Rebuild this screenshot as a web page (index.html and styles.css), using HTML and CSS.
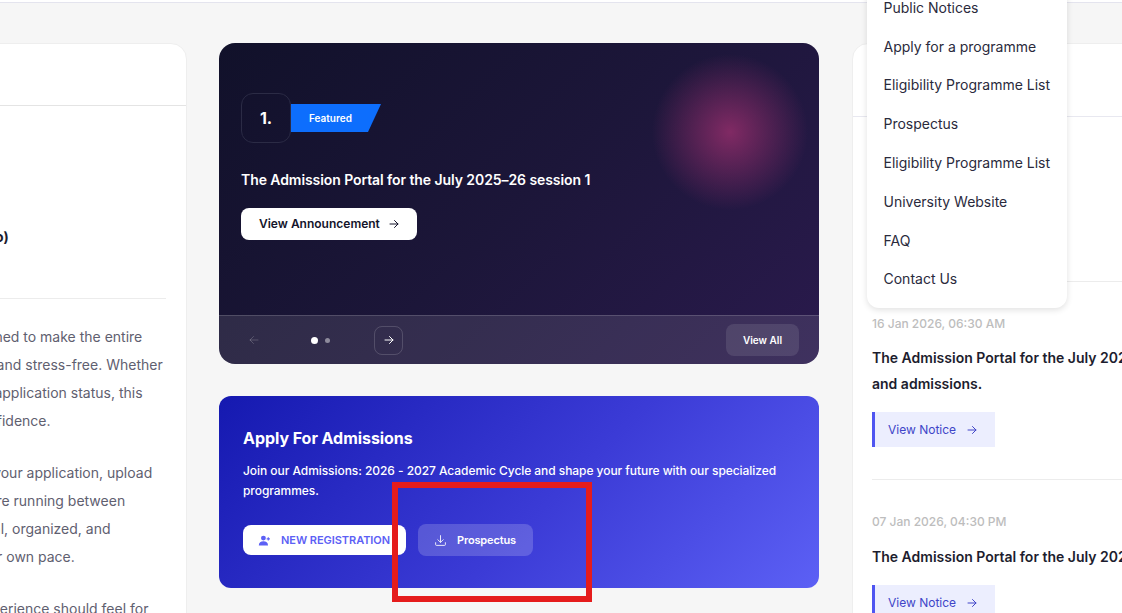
FILE: index.html
```html
<!DOCTYPE html>
<html lang="en">
<head>
    <meta charset="UTF-8">
    <meta name="viewport" content="width=device-width, initial-scale=1.0">
    <title>Admission Portal</title>
    <link rel="stylesheet" href="styles.css">
</head>
<body>

    <!-- Top bar -->
    <div class="top-bar"></div>

    <main class="layout">

        <!-- Left: about card -->
        <section class="card about-card">
            <div class="about-head"></div>
            <div class="about-body">
                <h4 class="about-name">Admissions Portal Guide (Info)</h4>
                <hr class="about-rule">
                <p class="about-text">The admission portal is designed to make the entire<br>application simple, fast, easy and stress-free. Whether<br>you are new or tracking your application status, this<br>a final step is taken in full confidence.</p>
                <p class="about-text">You can begin and complete your application, upload<br>your files and pay fees no more running between<br>The whole process is all digital, organized, and<br>and you can finish it all at your own pace.</p>
                <p class="about-text">We believe this admission experience should feel for</p>
            </div>
        </section>

        <!-- Centre column -->
        <div class="centre">
            <section class="hero">
                <div class="hero-body">
                    <div class="hero-tag">
                        <span class="hero-num">1.</span>
                        <span class="hero-flag">Featured</span>
                    </div>
                    <h2 class="hero-title">The Admission Portal for the July 2025–26 session 1</h2>
                    <a class="btn-announce" href="#">View Announcement
                        <svg class="icon" viewBox="0 0 24 24"><path d="M4 12h16M13 5l7 7-7 7"/></svg>
                    </a>
                </div>
                <div class="hero-foot">
                    <div class="hero-nav">
                        <span class="nav-btn nav-off"><svg class="icon" viewBox="0 0 24 24"><path d="M20 12H4M11 5l-7 7 7 7"/></svg></span>
                        <span class="dots"><i class="dot dot-on"></i><i class="dot"></i></span>
                        <span class="nav-btn nav-on"><svg class="icon" viewBox="0 0 24 24"><path d="M4 12h16M13 5l7 7-7 7"/></svg></span>
                    </div>
                    <a class="btn-all" href="#">View All</a>
                </div>
            </section>

            <section class="apply">
                <h3 class="apply-title">Apply For Admissions</h3>
                <p class="apply-text">Join our Admissions: 2026 - 2027 Academic Cycle and shape your future with our specialized programmes.</p>
                <div class="apply-btns">
                    <a class="btn-register" href="#">
                        <svg class="icon-user" viewBox="0 0 24 24"><circle cx="10" cy="7.5" r="4.5"/><path d="M1.5 21c0-4.800 3.600-7.500 8.500-7.500s8.500 2.700 8.500 7.500z"/><path d="M19 6v6M16 9h6" class="plus"/></svg>
                        NEW REGISTRATION
                    </a>
                    <a class="btn-prospectus" href="#">
                        <svg class="icon icon-dl" viewBox="0 0 24 24"><path d="M12 3v12M7 10.500l5 5 5-5M3 16v3.500a1.500 1.500 0 0 0 1.500 1.500h15a1.500 1.500 0 0 0 1.500-1.500V16"/></svg>
                        Prospectus
                    </a>
                </div>
            </section>
        </div>

        <!-- Right: notices -->
        <section class="card notices-card">
            <div class="notices-head"></div>
            <div class="notices-list">
                <article class="notice">
                    <p class="notice-date">21 Jan 2026, 10:00 AM</p>
                    <h4 class="notice-title">Admission Notice</h4>
                    <a class="btn-notice" href="#">View Notice
                        <svg class="icon" viewBox="0 0 24 24"><path d="M4 12h16M13 5l7 7-7 7"/></svg>
                    </a>
                </article>
                <article class="notice">
                    <p class="notice-date">16 Jan 2026, 06:30 AM</p>
                    <h4 class="notice-title">The Admission Portal for the July 2025–26 session is open for registrations<br>and admissions.</h4>
                    <a class="btn-notice" href="#">View Notice
                        <svg class="icon" viewBox="0 0 24 24"><path d="M4 12h16M13 5l7 7-7 7"/></svg>
                    </a>
                </article>
                <article class="notice notice-last">
                    <p class="notice-date">07 Jan 2026, 04:30 PM</p>
                    <h4 class="notice-title">The Admission Portal for the July 2025–26 session is now open.</h4>
                    <a class="btn-notice" href="#">View Notice
                        <svg class="icon" viewBox="0 0 24 24"><path d="M4 12h16M13 5l7 7-7 7"/></svg>
                    </a>
                </article>
            </div>
        </section>
    </main>

    <!-- Open menu -->
    <ul class="menu">
        <li><a href="#">Public Notices</a></li>
        <li><a href="#">Apply for a programme</a></li>
        <li><a href="#">Eligibility Programme List</a></li>
        <li><a href="#">Prospectus</a></li>
        <li><a href="#">Eligibility Programme List</a></li>
        <li><a href="#">University Website</a></li>
        <li><a href="#">FAQ</a></li>
        <li><a href="#">Contact Us</a></li>
    </ul>

    <!-- Red highlight box -->
    <div class="highlight"></div>

</body>
</html>
```

FILE: styles.css
```css
/* General Styles */
* {
    margin: 0;
    padding: 0;
    box-sizing: border-box;
    font-family: Inter, "Liberation Sans", sans-serif;
}
html, body {
    height: 613px;
    overflow: hidden;
}
body {
    position: relative;
    background: #f6f6f6;
    color: #1d1d2e;
}
a {
    text-decoration: none;
}
.icon {
    width: 12px;
    height: 12px;
    fill: none;
    stroke: currentColor;
    stroke-width: 2;
    stroke-linecap: round;
    stroke-linejoin: round;
    flex-shrink: 0;
}

/* Top bar */
.top-bar {
    height: 3px;
    background: #fff;
    border-bottom: 1px solid #e4e4ee;
}

/* Layout */
.layout {
    display: flex;
    align-items: flex-start;
    gap: 33px;
    padding-top: 40px;
}
.card {
    flex-shrink: 0;
    background: #fff;
    border: 1px solid #eeeeee;
    border-radius: 16px;
}

/* About card */
.about-card {
    width: 406px;
    margin-left: -219px;
    margin-right: -1px;
    height: 640px;
}
.about-head {
    height: 62px;
    border-bottom: 1px solid #e4e4e4;
}
.about-body {
    padding: 120px 20px 0 19px;
}
.about-name {
    font-size: 14px;
    line-height: 22px;
    font-weight: 700;
    white-space: nowrap;
}
.about-rule {
    border: 0;
    border-top: 1px solid #ececec;
    margin: 50px 0 24px;
}
.about-text {
    font-size: 14px;
    line-height: 28px;
    color: #5f6070;
    white-space: nowrap;
    margin-bottom: 24px;
}

/* Centre column */
.centre {
    flex-shrink: 0;
    width: 600px;
    display: flex;
    flex-direction: column;
    gap: 32px;
}

/* Hero */
.hero {
    height: 321px;
    border-radius: 16px;
    overflow: hidden;
    display: flex;
    flex-direction: column;
    color: #fff;
    background:
        radial-gradient(circle 78px at 511px 89px, rgba(139, 44, 104, 0.9), rgba(139, 44, 104, 0)),
        linear-gradient(135deg, #11112a 0%, #1c1639 50%, #2a1a4d 100%);
}
.hero-body {
    flex: 1;
    padding: 50px 22px 0;
}
.hero-tag {
    display: flex;
    align-items: center;
}
.hero-num {
    width: 50px;
    height: 50px;
    display: flex;
    align-items: center;
    justify-content: center;
    border: 1px solid #2b2b45;
    border-radius: 12px;
    font-size: 16px;
    font-weight: 700;
}
.hero-flag {
    width: 90px;
    height: 28px;
    display: flex;
    align-items: center;
    padding-left: 18px;
    background: #0d6efd;
    font-size: 10px;
    font-weight: 600;
    clip-path: polygon(0 0, 100% 0, calc(100% - 13px) 100%, 0 100%);
}
.hero-title {
    margin-top: 26px;
    font-size: 14px;
    line-height: 21px;
    font-weight: 600;
    letter-spacing: -0.08px;
}
.btn-announce {
    margin-top: 18px;
    width: 176px;
    height: 32px;
    display: flex;
    align-items: center;
    gap: 8px;
    padding: 0 0 1px 18px;
    background: #fff;
    color: #14142b;
    border-radius: 8px;
    font-size: 12px;
    font-weight: 600;
}
.hero-foot {
    height: 49px;
    display: flex;
    align-items: center;
    justify-content: space-between;
    padding: 0 20px;
    background: rgba(255, 255, 255, 0.1);
    border-top: 1px solid rgba(255, 255, 255, 0.16);
}
.hero-nav {
    width: 164px;
    display: flex;
    align-items: center;
    justify-content: space-between;
}
.nav-btn {
    width: 29px;
    height: 29px;
    display: flex;
    align-items: center;
    justify-content: center;
    border-radius: 8px;
}
.nav-off {
    color: rgba(255, 255, 255, 0.2);
}
.nav-on {
    border: 1px solid rgba(255, 255, 255, 0.16);
}
.dots {
    display: flex;
    align-items: center;
    gap: 7px;
    margin-right: 2px;
}
.dot {
    width: 5px;
    height: 5px;
    border-radius: 50%;
    background: rgba(255, 255, 255, 0.45);
}
.dot-on {
    width: 7px;
    height: 7px;
    background: #fff;
}
.btn-all {
    width: 73px;
    height: 32px;
    display: flex;
    align-items: center;
    justify-content: center;
    border-radius: 8px;
    background: rgba(255, 255, 255, 0.1);
    color: #fff;
    font-size: 10px;
    font-weight: 600;
}

/* Apply card */
.apply {
    height: 192px;
    padding: 31px 24px 0;
    border-radius: 12px;
    color: #fff;
    background: linear-gradient(135deg, #1519b0 0%, #3b3bd6 55%, #5c60f5 100%);
}
.apply-title {
    font-size: 16px;
    line-height: 22px;
    font-weight: 700;
    letter-spacing: -0.05px;
}
.apply-text {
    margin-top: 12px;
    font-size: 12px;
    line-height: 19.5px;
    font-weight: 500;
    letter-spacing: -0.055px;
}
.apply-btns {
    margin-top: 24px;
    display: flex;
    align-items: center;
    gap: 12px;
}
.btn-register {
    width: 163px;
    height: 30px;
    display: flex;
    align-items: center;
    gap: 10px;
    padding-left: 15px;
    background: #fff;
    color: #5c60f5;
    border-radius: 8px;
    font-size: 11px;
    font-weight: 600;
    white-space: nowrap;
    letter-spacing: -0.05px;
}
.icon-user {
    width: 13px;
    height: 13px;
    fill: #5c60f5;
}
.icon-user .plus {
    fill: none;
    stroke: #5c60f5;
    stroke-width: 2;
}
.btn-prospectus {
    width: 115px;
    height: 32px;
    display: flex;
    align-items: center;
    gap: 10px;
    padding-left: 16px;
    background: rgba(255, 255, 255, 0.18);
    color: #fff;
    border-radius: 8px;
    font-size: 11px;
    font-weight: 600;
    letter-spacing: -0.15px;
}
.icon-dl {
    width: 13px;
    height: 13px;
    stroke-width: 1.6;
}

/* Notices card */
.notices-card {
    width: 500px;
    height: 640px;
}
.notices-head {
    height: 73px;
    border-bottom: 1px solid #e8e8f0;
}
.notices-list {
    padding: 0 19px;
}
.notice {
    padding: 33px 0 32px;
    border-bottom: 1px solid #ececec;
}
.notice:first-child {
    padding-top: 26px;
}
.notice-date {
    font-size: 12px;
    line-height: 18px;
    font-weight: 500;
    color: #bdbdbd;
}
.notice-title {
    margin-top: 12px;
    font-size: 14px;
    line-height: 26px;
    font-weight: 600;
    white-space: nowrap;
    color: #1d1d2e;
}
.notice-last .notice-title {
    margin-top: 13px;
}
.btn-notice {
    margin-top: 15px;
    width: 123px;
    height: 35px;
    display: flex;
    align-items: center;
    gap: 10px;
    padding-left: 13px;
    background: #eceefe;
    border-left: 3px solid #4f55f1;
    color: #4045c8;
    font-size: 12px;
}

/* Open menu */
.menu {
    position: absolute;
    top: -21px;
    left: 867px;
    width: 200px;
    padding: 9px 0 10px;
    list-style-type: none;
    background: #fff;
    border-radius: 12px;
    box-shadow: 0 2px 6px rgba(0, 0, 0, 0.12);
}
.menu a {
    display: flex;
    align-items: center;
    height: 38.8px;
    padding-left: 16.5px;
    font-size: 14px;
    color: #2a2a3c;
}

/* Red highlight box */
.highlight {
    position: absolute;
    top: 482px;
    left: 392px;
    width: 200px;
    height: 120px;
    border: 6px solid #e51c1c;
}
```
